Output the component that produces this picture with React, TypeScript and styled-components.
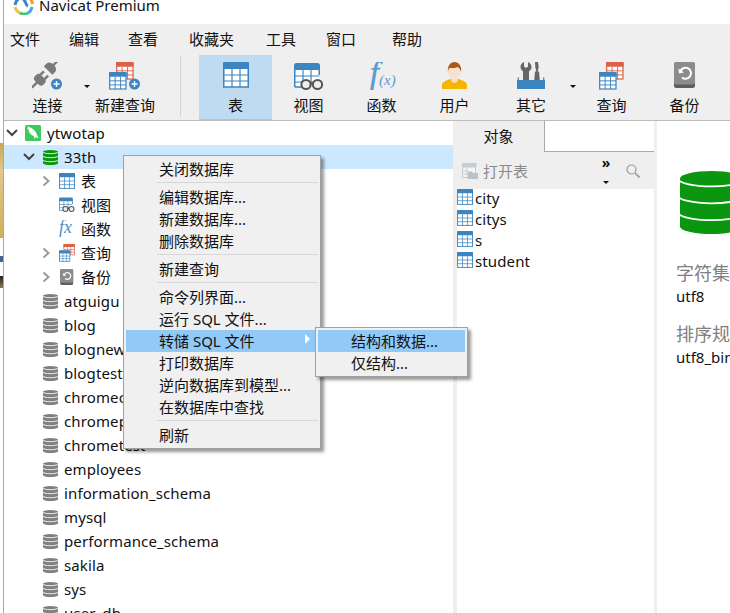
import styled, { createGlobalStyle } from "styled-components";

const GlobalStyle = createGlobalStyle`
  html, body {
    margin: 0;
    padding: 0;
    background: #fff;
  }
  * {
    box-sizing: border-box;
  }
`;

const UI_FONT = `"Noto Sans", "Noto Sans CJK SC", sans-serif`;

const BLUE = "#3d85c0";
const RED = "#dc6246";
const DB_GREEN = "#0a960f";
const DB_GREY = "#808080";

function GridIcon({ size, color, fill = "#fff" }: { size: number; color: string; fill?: string }) {
  return (
    <svg width={size} height={size} viewBox="0 0 26 26" style={{ display: "block", flexShrink: 0 }}>
      <rect x="0.75" y="1" width="24.5" height="24" fill={fill} stroke={color} strokeWidth="1.5" />
      <path d="M0 7V2.5A2.5 2.5 0 0 1 2.5 0h21A2.5 2.5 0 0 1 26 2.5V7Z" fill={color} />
      <path d="M1 13h24M1 19h24M9 7v18M17 7v18" stroke={color} strokeWidth="1.2" fill="none" />
    </svg>
  );
}

function ViewIcon({ size }: { size: number }) {
  return (
    <svg width={size} height={size} viewBox="0 0 30 28" style={{ display: "block" }}>
      <rect x="1" y="1" width="24" height="22" fill="#fff" />
      <path d="M1 13h24M1 19h24M9 7v16M17 7v16" stroke={BLUE} strokeWidth="1.2" fill="none" />
      <path d="M.75 6v18M25.25 6v6M.75 24h9" stroke={BLUE} strokeWidth="1.5" fill="none" />
      <path d="M0 7V2.5A2.5 2.5 0 0 1 2.5 0h21A2.5 2.5 0 0 1 26 2.5V7Z" fill={BLUE} />
      <circle cx="12" cy="21.5" r="4.6" fill="#efefef" stroke="#555" strokeWidth="2" />
      <circle cx="23.5" cy="21.5" r="4.6" fill="#efefef" stroke="#555" strokeWidth="2" />
      <path d="M16.5 20.5h2.5" stroke="#555" strokeWidth="2" />
    </svg>
  );
}

function MiniGrid({ x, y, color }: { x: number; y: number; color: string }) {
  return (
    <g transform={`translate(${x} ${y}) scale(0.68)`}>
      <rect x="1" y="1" width="24" height="24" fill="#fff" stroke={color} strokeWidth="1.8" />
      <path d="M0 7V2.5A2.5 2.5 0 0 1 2.5 0h21A2.5 2.5 0 0 1 26 2.5V7Z" fill={color} />
      <path d="M1 13h24M1 19h24M9 7v18M17 7v18" stroke={color} strokeWidth="1.4" fill="none" />
    </g>
  );
}

function QueryIcon({ width, withPlus }: { width: number; withPlus?: boolean }) {
  const vbWidth = withPlus ? 32 : 25;
  return (
    <svg width={width} height={(width * 28) / vbWidth} viewBox={`0 0 ${vbWidth} 28`} style={{ display: "block" }}>
      <MiniGrid x={7} y={0} color={RED} />
      <MiniGrid x={0} y={10} color={BLUE} />
      {withPlus && (
        <>
          <circle cx="25.5" cy="22" r="5.5" fill={BLUE} />
          <path d="M22.5 22h6M25.5 19v6" stroke="#fff" strokeWidth="1.4" />
        </>
      )}
    </svg>
  );
}

function ConnectIcon() {
  return (
    <svg width="32" height="28" viewBox="0 0 32 28" style={{ display: "block" }}>
      <g transform="translate(8 17.500) rotate(45)" fill="#7a7a7a">
        <rect x="-6" y="-4" width="12" height="8.500" rx="3.500" />
        <rect x="-4.300" y="-8.500" width="2.600" height="5" />
        <rect x="1.700" y="-8.500" width="2.600" height="5" />
        <rect x="-1.200" y="3" width="2.400" height="8.500" />
      </g>
      <g transform="translate(18.500 6) rotate(45)" fill="#7a7a7a">
        <path d="M-6 3.500V-.500C-6-3-3.500-4.500 0-4.500S6-3 6-.500V3.500Z" />
        <rect x="-1.200" y="-10.500" width="2.400" height="7" />
      </g>
      <circle cx="24.500" cy="22" r="5.500" fill={BLUE} />
      <path d="M21.500 22h6M24.500 19v6" stroke="#fff" strokeWidth="1.400" />
    </svg>
  );
}

function FxIcon() {
  return (
    <svg width="30" height="28" viewBox="0 0 30 28" style={{ display: "block" }}>
      <text x="3" y="21" fontFamily="Liberation Serif, serif" fontStyle="italic" fontSize="32" fill="#5b9bd1" stroke="#5b9bd1" strokeWidth="0.500">
        f
      </text>
      <text x="12" y="23" fontFamily="Liberation Serif, serif" fontStyle="italic" fontSize="15" fill="#5b9bd1">
        (x)
      </text>
    </svg>
  );
}

function FxSmallIcon() {
  return (
    <svg width="18" height="18" viewBox="0 0 18 18" style={{ display: "block" }}>
      <text x="0" y="14" fontFamily="Liberation Serif, serif" fontStyle="italic" fontSize="20" fill="#4b8fc9">
        fx
      </text>
    </svg>
  );
}

function UserIcon() {
  return (
    <svg width="25" height="27" viewBox="0 0 25 27" style={{ display: "block" }}>
      <path d="M0 27v-4c0-3 4-4.500 8.500-6h8c4.500 1.500 8.500 3 8.500 6v4Z" fill="#f4b400" />
      <path d="M9 14h7v4c0 1.500-1.500 3-3.500 3S9 19.500 9 18Z" fill="#f8dccb" />
      <ellipse cx="12.500" cy="9.500" rx="6.500" ry="8" fill="#f9e0d2" />
      <path d="M6 10C5 4 8.500 0 12.500 0S20 4 19 10c-.5-2.500-2-4.500-3.500-5C13 6.500 8 6 7.500 6 6.500 7 6.200 8.500 6 10Z" fill="#a8591b" />
    </svg>
  );
}

function OtherIcon() {
  return (
    <svg width="28" height="27" viewBox="0 0 28 27" style={{ display: "block" }}>
      <path d="M1.500 15.500 0.750 21h26.500l-.75-5.500" fill="none" stroke={BLUE} strokeWidth="1.300" />
      <path d="M4 0v4.500l2 1.500 2-1.500V0c2.500 1 3.500 3 3.500 5 0 2-1.200 3.500-2.500 4.300V21H3V9.300C1.700 8.500.5 7 .5 5c0-2 1-4 3.500-5Z" fill="#666" transform="translate(3 0)" />
      <path d="M18 0h3l.7 5-1 4.500h1.300l1 11.500h-6l1-11.500h1.300l-1-4.500Z" fill="#666" />
      <rect x="0" y="18" width="28" height="9" fill={BLUE} />
    </svg>
  );
}

function BackupIcon({ size }: { size: number }) {
  return (
    <svg width={size} height={size} viewBox="0 0 26 26" style={{ display: "block" }}>
      <rect x="2" y="0" width="21" height="26" rx="2.500" fill="#5e5e5e" />
      <rect x="2" y="0" width="21" height="22.500" rx="2.500" fill="#8c8c8c" />
      <path d="M8.500 9a5.500 5.500 0 1 1 1.500 6.500" fill="none" stroke="#fff" strokeWidth="2" />
      <path d="M6.500 6.500 7 11.500 12 10.500Z" fill="#fff" />
    </svg>
  );
}

function DbIcon({ size, color }: { size: number; color: string }) {
  const gap = size > 20 ? 0.9 : 1.8;
  return (
    <svg width={size} height={size} viewBox="0 0 32 32" style={{ display: "block", flexShrink: 0 }}>
      <path d="M0 3.800A16 3.800 0 0 1 32 3.800V28.200A16 3.800 0 0 1 0 28.200Z" fill={color} />
      <path
        d="M-1 3.800A17 4 0 0 0 33 3.800M-1 12.400A17 4 0 0 0 33 12.400M-1 21A17 4 0 0 0 33 21"
        fill="none"
        stroke="#fff"
        strokeWidth={gap}
      />
    </svg>
  );
}

function MysqlIcon() {
  return (
    <svg width="16" height="16" viewBox="0 0 16 16" style={{ display: "block" }}>
      <rect width="16" height="16" rx="1.500" fill="#3ec95c" />
      <path d="M2 1.500c3 .5 5 1.500 7 3.500 1.500 1.500 2.500 3 3 5 .3 1 1 2 2 3-1.500 0-2.500-.5-3.300-1.500L10 14.500 8.700 11C6 10 3.500 7.500 3.500 4.500L2 3.500l1-.5Z" fill="#fff" />
    </svg>
  );
}

function OpenTableIcon() {
  return (
    <svg width="16" height="16" viewBox="0 0 16 16" style={{ display: "block" }}>
      <rect x=".5" y=".5" width="13" height="14" fill="#f4f4f4" stroke="#c6ced4" />
      <path d="M0 0h14v4H0ZM1 8h5M1 11h5M5 4v10" fill="#c6ced4" stroke="#c6ced4" />
      <path d="M6 8.500h4l1 1.500h5v6H6Z" fill="#b8c2ca" />
    </svg>
  );
}

function SearchIcon() {
  return (
    <svg width="14" height="14" viewBox="0 0 14 14" style={{ display: "block" }}>
      <circle cx="5.500" cy="5.500" r="4.500" fill="none" stroke="#999" strokeWidth="1.200" />
      <path d="M9 9l4.500 4.500" stroke="#999" strokeWidth="1.600" />
    </svg>
  );
}

function Chevron({ open }: { open: boolean }) {
  return open ? (
    <svg width="14" height="10" viewBox="0 0 14 10" style={{ display: "block" }}>
      <path d="M2 2l5 5 5-5" fill="none" stroke="#444" strokeWidth="2" />
    </svg>
  ) : (
    <svg width="14" height="14" viewBox="0 0 14 14" style={{ display: "block" }}>
      <path d="M4.500 2.500 9.500 7l-5 4.500" fill="none" stroke="#9a9a9a" strokeWidth="2" />
    </svg>
  );
}

function NavicatLogo() {
  return (
    <svg width="21" height="21" viewBox="0 0 21 21" style={{ display: "block" }}>
      <path d="M2 13A8.500 8.500 0 0 0 7 19" fill="none" stroke="#e6c53a" strokeWidth="3" />
      <path d="M7 19a8.500 8.500 0 0 0 8 0" fill="none" stroke="#4bc26b" strokeWidth="3" />
      <path d="M15 19a8.500 8.500 0 0 0 4-6" fill="none" stroke="#48a8dc" strokeWidth="3" />
      <path d="M2 11C3 6 6 3 10 5c3 1.500 2 6 5 7" fill="none" stroke="#3e86c8" strokeWidth="3" />
      <path d="M13 4c3-1 6 1 6.500 6" fill="none" stroke="#ef9a3a" strokeWidth="3" />
    </svg>
  );
}

const Page = styled.div`
  display: flex;
  width: 730px;
  height: 613px;
  overflow: hidden;
  position: relative;
  font-family: ${UI_FONT};
  color: #111;
`;

const DesktopStrip = styled.div`
  width: 3px;
  flex-shrink: 0;
  background: linear-gradient(
    to bottom,
    #fff 0,
    #fff 143px,
    #c9a651 143px,
    #e0c98c 170px,
    #cfae5e 238px,
    #fff 238px,
    #fff 256px,
    #46618a 256px,
    #46618a 262px,
    #fff 262px,
    #fff 276px,
    #222 276px,
    #8a7a50 288px,
    #fff 288px
  );
`;

const Window = styled.div`
  flex: 1;
  min-width: 0;
  display: flex;
  flex-direction: column;
  border-left: 1px solid #a8a8a8;
`;

const TitleBar = styled.div`
  height: 24px;
  flex-shrink: 0;
  display: flex;
  gap: 5px;
  padding-left: 9px;
  background: #fff;
  overflow: hidden;
`;

const LogoSlot = styled.div`
  margin-top: -6px;
`;

const TitleText = styled.div`
  margin-top: -5px;
  font-size: 15px;
  line-height: 21px;
`;

const MenuBar = styled.div`
  height: 31px;
  flex-shrink: 0;
  display: flex;
  align-items: center;
  padding: 0 0 2px 6px;
  background: #efefef;
  font-size: 15px;
`;

const MenuLabel = styled.div<{ $width: number }>`
  width: ${(p) => p.$width}px;
`;

const ToolBar = styled.div`
  height: 66px;
  flex-shrink: 0;
  display: flex;
  padding-left: 7px;
  background: #efefef;
  border-bottom: 1px solid #bcbcbc;
  overflow: hidden;
`;

const ToolButton = styled.div<{ $active?: boolean; $width?: number }>`
  width: ${(p) => p.$width ?? 73}px;
  flex-shrink: 0;
  display: flex;
  flex-direction: column;
  align-items: center;
  background: ${(p) => (p.$active ? "#bfdbf2" : "transparent")};
  border-bottom: ${(p) => (p.$active ? "1px solid #9cc9ee" : "none")};
`;

const ToolIcon = styled.div`
  height: 28px;
  margin-top: 7px;
  display: flex;
  align-items: flex-start;
`;

const ToolLabel = styled.div`
  margin-top: 5px;
  font-size: 15px;
  line-height: 20px;
  white-space: nowrap;
`;

const CaretSlot = styled.div<{ $width: number }>`
  width: ${(p) => p.$width}px;
  flex-shrink: 0;
  display: flex;
  justify-content: center;
  padding-top: 30px;
`;

const Caret = styled.div`
  width: 0;
  height: 0;
  border-left: 3px solid transparent;
  border-right: 3px solid transparent;
  border-top: 3px solid #111;
`;

const ToolDivider = styled.div`
  width: 1px;
  height: 61px;
  margin: 1px 18px 0 19px;
  flex-shrink: 0;
  background: #d6d6d6;
`;

const Body = styled.div`
  flex: 1;
  min-height: 0;
  display: flex;
`;

const Tree = styled.div`
  width: 449px;
  flex-shrink: 0;
  background: #fff;
  overflow: hidden;
`;

const TreeRow = styled.div<{ $level: number; $selected?: boolean }>`
  height: 24px;
  display: flex;
  align-items: center;
  padding-left: ${(p) => p.$level * 17 + 1}px;
  background: ${(p) => (p.$selected ? "#cce8ff" : "transparent")};
  font-size: 15px;
  line-height: 20px;
  letter-spacing: 0.12px;
  white-space: nowrap;
`;

const ChevronSlot = styled.div`
  width: 14px;
  flex-shrink: 0;
`;

const TreeIcon = styled.div`
  width: 16px;
  margin: 0 6px;
  flex-shrink: 0;
  display: flex;
  justify-content: center;
`;

const ObjectsPanel = styled.div`
  width: 204px;
  flex-shrink: 0;
  display: flex;
  flex-direction: column;
  background: #efefef;
  padding-right: 3px;
`;

const TabRow = styled.div`
  height: 31px;
  flex-shrink: 0;
  display: flex;
`;

const Tab = styled.div`
  width: 91px;
  display: flex;
  align-items: center;
  justify-content: center;
  padding-bottom: 2px;
  font-size: 15px;
  background: #efefef;
`;

const TabFiller = styled.div`
  flex: 1;
  background: #fff;
  border-left: 1px solid #a9a9a9;
  border-bottom: 1px solid #a9a9a9;
`;

const ObjectsBar = styled.div`
  height: 37px;
  flex-shrink: 0;
  display: flex;
  align-items: center;
  padding-left: 9px;
  color: #8a8a8a;
  font-size: 15px;
`;

const OpenLabel = styled.div`
  margin-left: 5px;
  flex: 1;
`;

const OverflowSlot = styled.div`
  width: 10px;
  height: 26px;
  display: flex;
  flex-direction: column;
  align-items: center;
  justify-content: space-between;
  color: #111;
  font-size: 14px;
  font-weight: 700;
  line-height: 10px;
`;

const SearchSlot = styled.div`
  margin: 0 14px 0 15px;
`;

const ObjectList = styled.div`
  flex: 1;
  margin-left: 4px;
  background: #fff;
`;

const ObjectRow = styled.div`
  height: 21px;
  display: flex;
  align-items: flex-start;
  gap: 2px;
  font-size: 15px;
  line-height: 19px;
  letter-spacing: 0.12px;
`;

const InfoPanel = styled.div`
  flex: 1;
  min-width: 0;
  overflow: hidden;
  background: #fff;
  padding: 50px 0 0 19px;
  white-space: nowrap;
`;

const InfoIcon = styled.div`
  margin: 0 0 27px 4px;
`;

const InfoLabel = styled.div`
  font-size: 18px;
  line-height: 24px;
  color: #808080;
`;

const InfoValue = styled.div`
  font-size: 15px;
  line-height: 22px;
  margin-bottom: 15px;
`;

const ContextMenu = styled.div<{ $left: number; $top: number; $width: number }>`
  position: absolute;
  left: ${(p) => p.$left}px;
  top: ${(p) => p.$top}px;
  width: ${(p) => p.$width}px;
  padding: 2px;
  background: #f0f0f0;
  border: 1px solid #a0a0a0;
  box-shadow: 3px 3px 3px rgba(0, 0, 0, 0.4);
  font-size: 15px;
`;

const MenuRow = styled.div<{ $hot?: boolean }>`
  height: 22px;
  display: flex;
  align-items: center;
  padding: 0 0 2px 33px;
  position: relative;
  background: ${(p) => (p.$hot ? "#91c9f7" : "transparent")};
  white-space: nowrap;
`;

const MenuSeparator = styled.div`
  height: 1px;
  margin: 2px 0 3px 31px;
  background: #d7d7d7;
`;

const SubArrow = styled.div`
  position: absolute;
  right: 8px;
  top: 4px;
  width: 0;
  height: 0;
  border-top: 5px solid transparent;
  border-bottom: 5px solid transparent;
  border-left: 5px solid #fff;
`;

const menuNames = [
  { label: "文件", width: 59 },
  { label: "编辑", width: 59 },
  { label: "查看", width: 61 },
  { label: "收藏夹", width: 77 },
  { label: "工具", width: 60 },
  { label: "窗口", width: 66 },
  { label: "帮助", width: 40 },
];

const databases = [
  "atguigu",
  "blog",
  "blognew",
  "blogtest",
  "chromecms",
  "chromeplugin",
  "chrometest",
  "employees",
  "information_schema",
  "mysql",
  "performance_schema",
  "sakila",
  "sys",
  "user_db",
];

const tables = ["city", "citys", "s", "student"];

const contextItems = [
  ["关闭数据库"],
  ["编辑数据库...", "新建数据库...", "删除数据库"],
  ["新建查询"],
  ["命令列界面...", "运行 SQL 文件...", "转储 SQL 文件", "打印数据库", "逆向数据库到模型...", "在数据库中查找"],
  ["刷新"],
];

export default function App() {
  return (
    <>
      <GlobalStyle />
      <Page>
        <DesktopStrip />
        <Window>
          <TitleBar>
            <LogoSlot>
              <NavicatLogo />
            </LogoSlot>
            <TitleText>Navicat Premium</TitleText>
          </TitleBar>
          <MenuBar>
            {menuNames.map((m) => (
              <MenuLabel key={m.label} $width={m.width}>
                {m.label}
              </MenuLabel>
            ))}
          </MenuBar>
          <ToolBar>
            <ToolButton>
              <ToolIcon>
                <ConnectIcon />
              </ToolIcon>
              <ToolLabel>连接</ToolLabel>
            </ToolButton>
            <CaretSlot $width={5}>
              <Caret />
            </CaretSlot>
            <ToolButton $width={72}>
              <ToolIcon>
                <QueryIcon width={32} withPlus />
              </ToolIcon>
              <ToolLabel>新建查询</ToolLabel>
            </ToolButton>
            <ToolDivider />
            <ToolButton $active>
              <ToolIcon>
                <GridIcon size={26} color={BLUE} />
              </ToolIcon>
              <ToolLabel>表</ToolLabel>
            </ToolButton>
            <ToolButton>
              <ToolIcon>
                <ViewIcon size={30} />
              </ToolIcon>
              <ToolLabel>视图</ToolLabel>
            </ToolButton>
            <ToolButton>
              <ToolIcon>
                <FxIcon />
              </ToolIcon>
              <ToolLabel>函数</ToolLabel>
            </ToolButton>
            <ToolButton>
              <ToolIcon>
                <UserIcon />
              </ToolIcon>
              <ToolLabel>用户</ToolLabel>
            </ToolButton>
            <ToolButton $width={80}>
              <ToolIcon>
                <OtherIcon />
              </ToolIcon>
              <ToolLabel>其它</ToolLabel>
            </ToolButton>
            <CaretSlot $width={4}>
              <Caret />
            </CaretSlot>
            <ToolButton>
              <ToolIcon>
                <QueryIcon width={25} />
              </ToolIcon>
              <ToolLabel>查询</ToolLabel>
            </ToolButton>
            <ToolButton>
              <ToolIcon>
                <BackupIcon size={26} />
              </ToolIcon>
              <ToolLabel>备份</ToolLabel>
            </ToolButton>
            <ToolButton $width={44}>
              <ToolIcon />
              <ToolLabel>自动</ToolLabel>
            </ToolButton>
          </ToolBar>
          <Body>
            <Tree>
              <TreeRow $level={0}>
                <ChevronSlot>
                  <Chevron open />
                </ChevronSlot>
                <TreeIcon>
                  <MysqlIcon />
                </TreeIcon>
                ytwotap
              </TreeRow>
              <TreeRow $level={1} $selected>
                <ChevronSlot>
                  <Chevron open />
                </ChevronSlot>
                <TreeIcon>
                  <DbIcon size={15} color={DB_GREEN} />
                </TreeIcon>
                33th
              </TreeRow>
              <TreeRow $level={2}>
                <ChevronSlot>
                  <Chevron open={false} />
                </ChevronSlot>
                <TreeIcon>
                  <GridIcon size={16} color={BLUE} />
                </TreeIcon>
                表
              </TreeRow>
              <TreeRow $level={2}>
                <ChevronSlot />
                <TreeIcon>
                  <ViewIcon size={16} />
                </TreeIcon>
                视图
              </TreeRow>
              <TreeRow $level={2}>
                <ChevronSlot />
                <TreeIcon>
                  <FxSmallIcon />
                </TreeIcon>
                函数
              </TreeRow>
              <TreeRow $level={2}>
                <ChevronSlot>
                  <Chevron open={false} />
                </ChevronSlot>
                <TreeIcon>
                  <QueryIcon width={16} />
                </TreeIcon>
                查询
              </TreeRow>
              <TreeRow $level={2}>
                <ChevronSlot>
                  <Chevron open={false} />
                </ChevronSlot>
                <TreeIcon>
                  <BackupIcon size={16} />
                </TreeIcon>
                备份
              </TreeRow>
              {databases.map((name) => (
                <TreeRow key={name} $level={1}>
                  <ChevronSlot />
                  <TreeIcon>
                    <DbIcon size={15} color={DB_GREY} />
                  </TreeIcon>
                  {name}
                </TreeRow>
              ))}
            </Tree>
            <ObjectsPanel>
              <TabRow>
                <Tab>对象</Tab>
                <TabFiller />
              </TabRow>
              <ObjectsBar>
                <OpenTableIcon />
                <OpenLabel>打开表</OpenLabel>
                <OverflowSlot>
                  <span>»</span>
                  <Caret />
                </OverflowSlot>
                <SearchSlot>
                  <SearchIcon />
                </SearchSlot>
              </ObjectsBar>
              <ObjectList>
                {tables.map((name) => (
                  <ObjectRow key={name}>
                    <GridIcon size={16} color={BLUE} />
                    {name}
                  </ObjectRow>
                ))}
              </ObjectList>
            </ObjectsPanel>
            <InfoPanel>
              <InfoIcon>
                <DbIcon size={63} color={DB_GREEN} />
              </InfoIcon>
              <InfoLabel>字符集</InfoLabel>
              <InfoValue>utf8</InfoValue>
              <InfoLabel>排序规则</InfoLabel>
              <InfoValue>utf8_bin</InfoValue>
            </InfoPanel>
          </Body>
        </Window>

        <ContextMenu $left={123} $top={155} $width={198}>
          {contextItems.map((group, i) => (
            <div key={group[0]}>
              {i > 0 && <MenuSeparator />}
              {group.map((label) => (
                <MenuRow key={label} $hot={label === "转储 SQL 文件"}>
                  {label}
                  {label === "转储 SQL 文件" && <SubArrow />}
                </MenuRow>
              ))}
            </div>
          ))}
        </ContextMenu>
        <ContextMenu $left={315} $top={327} $width={153}>
          <MenuRow $hot>结构和数据...</MenuRow>
          <MenuRow>仅结构...</MenuRow>
        </ContextMenu>
      </Page>
    </>
  );
}
